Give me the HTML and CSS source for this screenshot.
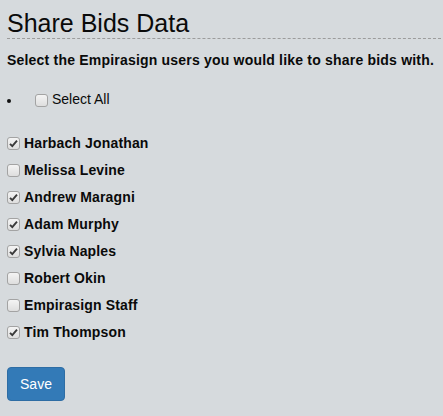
FILE: index.html
```html
<!DOCTYPE html>
<html>
<head>
<meta charset="utf-8">
<link rel="stylesheet" href="styles.css">
</head>
<body>
<div class="page">
  <h1 class="title">Share Bids Data</h1>
  <p class="lead">Select the Empirasign users you would like to share bids with.</p>
  <div class="select-all">
    <span class="bullet"></span>
    <label class="row all"><span class="cb"></span>Select All</label>
  </div>
  <div class="users">
    <label class="row user"><span class="cb on"><svg viewBox="0 0 13 13" width="13" height="13"><path d="M3 6.8 L5.3 9.2 L10 3.6" fill="none" stroke="#3a3a3a" stroke-width="1.9"/></svg></span>Harbach Jonathan</label>
    <label class="row user"><span class="cb"></span>Melissa Levine</label>
    <label class="row user"><span class="cb on"><svg viewBox="0 0 13 13" width="13" height="13"><path d="M3 6.8 L5.3 9.2 L10 3.6" fill="none" stroke="#3a3a3a" stroke-width="1.9"/></svg></span>Andrew Maragni</label>
    <label class="row user"><span class="cb on"><svg viewBox="0 0 13 13" width="13" height="13"><path d="M3 6.8 L5.3 9.2 L10 3.6" fill="none" stroke="#3a3a3a" stroke-width="1.9"/></svg></span>Adam Murphy</label>
    <label class="row user"><span class="cb on"><svg viewBox="0 0 13 13" width="13" height="13"><path d="M3 6.8 L5.3 9.2 L10 3.6" fill="none" stroke="#3a3a3a" stroke-width="1.9"/></svg></span>Sylvia Naples</label>
    <label class="row user"><span class="cb"></span>Robert Okin</label>
    <label class="row user"><span class="cb"></span>Empirasign Staff</label>
    <label class="row user"><span class="cb on"><svg viewBox="0 0 13 13" width="13" height="13"><path d="M3 6.8 L5.3 9.2 L10 3.6" fill="none" stroke="#3a3a3a" stroke-width="1.9"/></svg></span>Tim Thompson</label>
  </div>
  <button class="btn-save" type="button">Save</button>
</div>
</body>
</html>
```
FILE: styles.css
```css
html, body {
  margin: 0;
  padding: 0;
  background: #d6dadd;
}
body {
  font-family: "Liberation Sans", Arial, sans-serif;
  color: #0a0a0a;
}
.page {
  padding: 9px 2px 0 7px;
}
.title {
  margin: 0;
  font-size: 25px;
  font-weight: normal;
  line-height: 28px;
  padding-bottom: 1px;
  border-bottom: 1px dashed #9c9c9c;
}
.lead {
  margin: 11px 0 0 0;
  font-size: 14px;
  font-weight: bold;
  line-height: 20px;
  letter-spacing: 0.2px;
}
.select-all {
  display: flex;
  align-items: center;
  margin-top: 19px;
  height: 20px;
}
.bullet {
  width: 4px;
  height: 4px;
  border-radius: 50%;
  background: #111;
  margin-top: 4px;
  margin-right: 24px;
}
.row {
  display: flex;
  align-items: center;
  font-size: 14px;
  line-height: 20px;
  height: 20px;
}
.row .cb {
  margin-right: 4px;
}
.all .cb {
  margin-top: 3px;
}
.user {
  font-weight: bold;
  letter-spacing: 0.15px;
}
.users {
  display: flex;
  flex-direction: column;
  gap: 7px;
  margin-top: 24px;
}
.cb {
  box-sizing: border-box;
  width: 13px;
  height: 13px;
  flex: none;
  border: 1px solid #a3a3a3;
  border-radius: 3px;
  background: linear-gradient(#f4f4f4, #dedede);
  display: flex;
  align-items: center;
  justify-content: center;
  overflow: hidden;
}
.cb svg {
  display: block;
  width: 13px;
  height: 13px;
  flex: none;
}
.btn-save {
  margin-top: 25px;
  display: block;
  box-sizing: border-box;
  width: 58px;
  height: 34px;
  padding: 6px 12px;
  font-family: "Liberation Sans", Arial, sans-serif;
  font-size: 14px;
  line-height: 20px;
  color: #fff;
  background: #337ab7;
  border: 1px solid #2e6da4;
  border-radius: 4px;
}
```
